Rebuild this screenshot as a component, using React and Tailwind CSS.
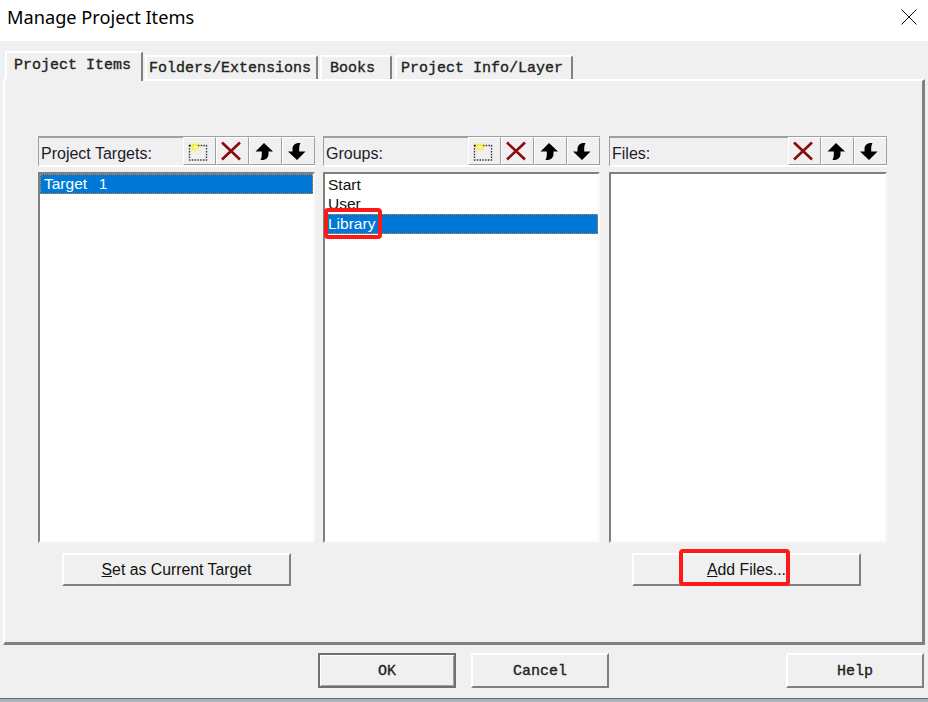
import React from "react";

const sans = "font-['Liberation_Sans',Arial,sans-serif]";
const mono = "font-['Liberation_Mono','Courier_New',monospace]";

const NewIcon = () => (
  <svg width="20" height="20" viewBox="0 0 20 20">
    <rect x="1.5" y="4.5" width="17" height="14.5" fill="none" stroke="#333" strokeWidth="1.4" strokeDasharray="1.5 1.3" />
    <path d="M7 0.5L8 3.8 11.5 1.5 9.6 5 13 6 9.6 7 11 10 8 8.2 7 11 6 8.2 3 10 4.4 7 1 6 4.4 5 2.5 1.5 6 3.8Z" fill="#f6f03c" />
    <circle cx="7" cy="6" r="1.5" fill="#fffde0" />
  </svg>
);

const DeleteIcon = () => (
  <svg width="22" height="20" viewBox="0 0 22 20">
    <path d="M2 1.5L20 18.5M20 1.5L2 18.5" stroke="#8b0a0a" strokeWidth="2.6" fill="none" />
  </svg>
);

const UpIcon = () => (
  <svg width="18" height="17" viewBox="0 0 18 17">
    <path d="M9 0L18 8.5H13.5V11C13.5 14 11.5 16.5 8 17H5.5C6.6 15 6.8 13 6.8 11V8.5H0.5Z" fill="#000" />
  </svg>
);

const DownIcon = () => (
  <svg width="18" height="17" viewBox="0 0 18 17">
    <path d="M9 17L0 8.5H4.5V6C4.5 3 6.5 0.5 10 0H12.5C11.4 2 11.2 4 11.2 6V8.5H17.5Z" fill="#000" />
  </svg>
);

const ToolButton = ({ children }) => (
  <div className="w-[33px] h-[28px] flex items-center justify-center pr-[3px] border-t border-l border-t-white border-l-white border-r border-b border-r-[#a0a0a0] border-b-[#a0a0a0]">
    {children}
  </div>
);

const Column = ({ title, hasNew, className = "", children }) => (
  <div className={`w-[277px] flex flex-col ${className}`}>
    <div className="h-[31px] flex items-end justify-between border-t-2 border-l border-t-[#a0a0a0] border-l-[#a0a0a0] border-b-2 border-b-white">
      <span className={`pl-[2px] -mb-[1px] text-[16px] leading-[24px] text-[#1c1c2c] ${sans}`}>{title}</span>
      <div className="flex">
        {hasNew && <ToolButton><NewIcon /></ToolButton>}
        <ToolButton><DeleteIcon /></ToolButton>
        <ToolButton><UpIcon /></ToolButton>
        <ToolButton><DownIcon /></ToolButton>
      </div>
    </div>
    <div className={`mt-[5px] h-[371px] bg-white border-t-[2px] border-l-[2px] border-t-[#808080] border-l-[#808080] border-r-[2px] border-b-[2px] border-r-[#f8f8f8] border-b-[#f8f8f8] text-[15.5px] leading-[20px] text-[#111] ${sans}`}>
      {children}
    </div>
  </div>
);

const Selected = ({ className = "", children }) => (
  <div className={`h-[20px] bg-[#0078d7] text-white whitespace-pre border border-dotted border-[#e08a30] leading-[18px] ${className}`}>
    {children}
  </div>
);

const PushButton = ({ className = "", children }) => (
  <button className={`h-[33px] w-[229px] bg-[#f0f0f0] border-t-2 border-l-2 border-t-white border-l-white border-r-2 border-b-2 border-r-[#808080] border-b-[#808080] text-[15.8px] text-[#111] ${sans} ${className}`}>
    {children}
  </button>
);

const DialogButton = ({ isDefault, children }) => (
  <button className={`h-[35px] w-[138px] pt-[3px] bg-[#f0f0f0] text-[15px] [-webkit-text-stroke:0.35px_#222] text-[#222] ${mono} ${isDefault ? "border-2 border-[#707070] shadow-[inset_1px_1px_0_#fff,inset_-1px_-1px_0_#a0a0a0]" : "border-t-2 border-l-2 border-t-white border-l-white border-r-2 border-b-2 border-r-[#808080] border-b-[#808080]"}`}>
    {children}
  </button>
);

const Tab = ({ active, className = "", children }) => (
  <div className={`flex items-center bg-[#f0f0f0] border-t-2 border-l-2 border-t-white border-l-white border-r-2 border-r-[#808080] rounded-t-[2px] text-[15px] [-webkit-text-stroke:0.35px_#222] text-[#222] whitespace-pre ${mono} ${active ? "h-[30px] -mb-[2px] z-10 relative pb-[2px]" : "h-[24px] pt-[2px]"} ${className}`}>
    {children}
  </div>
);

export default function App() {
  return (
    <div className="relative w-[928px] h-[702px] overflow-hidden bg-[#f0f0f0] flex flex-col">
      <div className="h-[41px] bg-white flex items-center justify-between pl-[7px] pr-[11px] pb-[7px]">
        <span className="font-['Noto_Sans',sans-serif] text-[18.2px] text-black leading-[34px]">Manage Project Items</span>
        <svg width="16" height="16" viewBox="0 0 16 16">
          <path d="M0.5 0.5L15.5 15.5M15.5 0.5L0.5 15.5" stroke="#111" strokeWidth="1" fill="none" />
        </svg>
      </div>

      <div className="pt-[10px] px-[3px] flex flex-col">
        <div className="h-[28px] flex items-end pl-[2px]">
          <Tab active className="w-[138px] pl-[7px]">Project Items</Tab>
          <Tab className="w-[173px] ml-[2px] pl-[2px]">Folders/Extensions</Tab>
          <Tab className="w-[72px] ml-[2px] pl-[8px]">Books</Tab>
          <Tab className="w-[178px] ml-[3px] pl-[4px]">Project Info/Layer</Tab>
        </div>

        <div className="h-[566px] border-t-2 border-l-2 border-t-white border-l-white border-r-[3px] border-b-[3px] border-r-[#808080] border-b-[#808080] pt-[55px] pl-[33px]">
          <div className="flex">
            <Column title="Project Targets:" hasNew>
              <Selected className="px-[3px] [word-spacing:1.5px]">Target  1</Selected>
            </Column>
            <Column title="Groups:" hasNew className="ml-[8px]">
              <div className="pl-[3px] pt-[1px] h-[20px]">Start</div>
              <div className="pl-[3px] h-[20px]">User</div>
              <Selected className="px-[2px]">Library</Selected>
            </Column>
            <Column title="Files:" className="ml-[9px] w-[278px]" />
          </div>
          <div className="flex mt-[10px] pl-[24px]">
            <PushButton><span className="underline">S</span>et as Current Target</PushButton>
            <PushButton className="ml-[341px]"><span className="underline">A</span>dd Files...</PushButton>
          </div>
        </div>

        <div className="mt-[8px] flex pl-[315px]">
          <DialogButton isDefault>OK</DialogButton>
          <div className="ml-[15px]"><DialogButton>Cancel</DialogButton></div>
          <div className="ml-[177px]"><DialogButton>Help</DialogButton></div>
        </div>
      </div>

      <div className="absolute left-0 right-0 bottom-0 h-[4px] bg-[#aab4be] border-t border-t-[#5f6b78]" />

      <div className="absolute left-[324px] top-[208px] w-[58px] h-[31px] border-[4px] border-[#ff1a1a] rounded-[4px]" />
      <div className="absolute left-[679px] top-[549px] w-[111px] h-[37px] border-[4px] border-[#ff1a1a] rounded-[4px]" />
    </div>
  );
}
